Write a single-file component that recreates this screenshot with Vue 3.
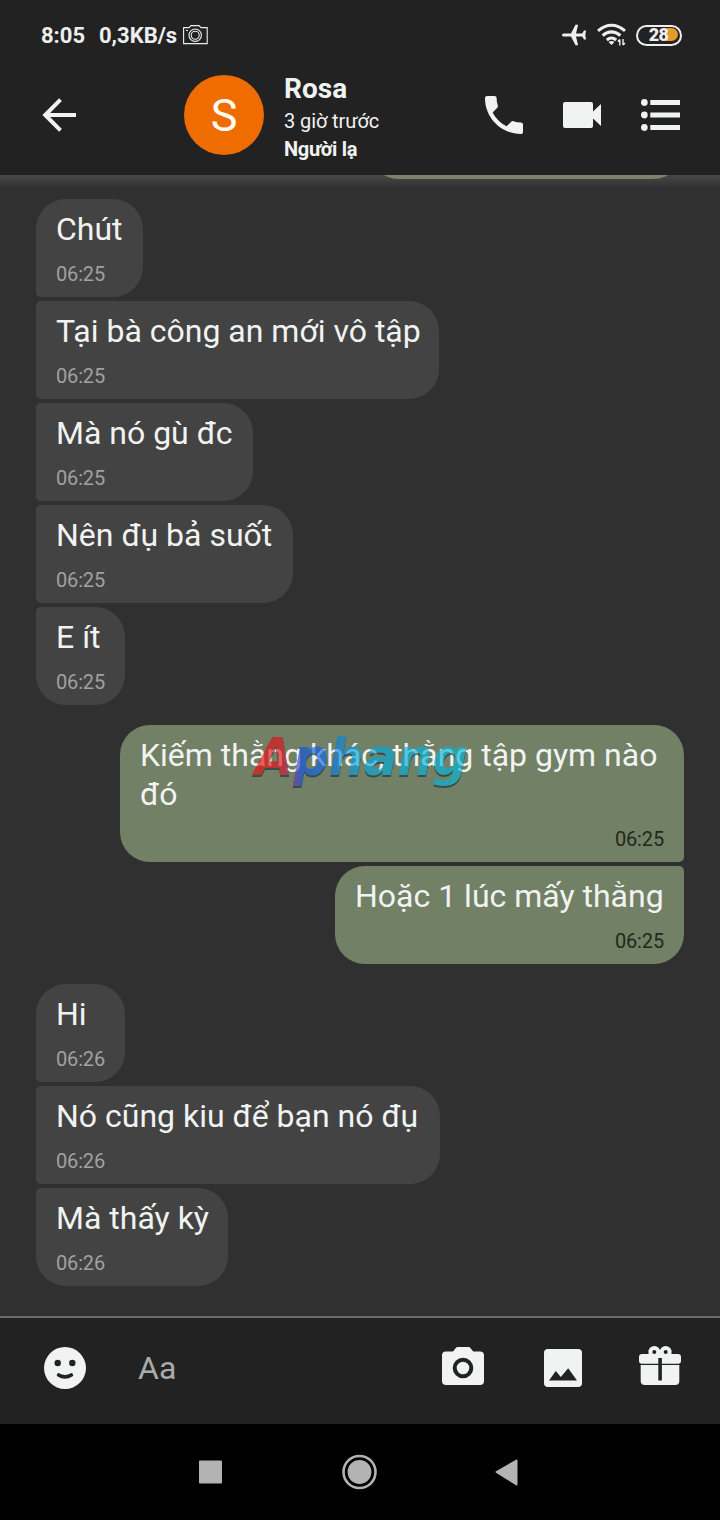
<script setup>
const groups = [
  {
    side: 'in',
    messages: [
      { text: 'Chút', time: '06:25', width: 107 },
      { text: 'Tại bà công an mới vô tập', time: '06:25', width: 403 },
      { text: 'Mà nó gù đc', time: '06:25', width: 217 },
      { text: 'Nên đụ bả suốt', time: '06:25', width: 257 },
      { text: 'E ít', time: '06:25', width: 89 },
    ],
  },
  {
    side: 'out',
    messages: [
      { text: 'Kiếm thằng khác, thằng tập gym nào đó', time: '06:25', width: 564, wrap: true },
      { text: 'Hoặc 1 lúc mấy thằng', time: '06:25', width: 349 },
    ],
  },
  {
    side: 'in',
    messages: [
      { text: 'Hi', time: '06:26', width: 89 },
      { text: 'Nó cũng kiu để bạn nó đụ', time: '06:26', width: 404 },
      { text: 'Mà thấy kỳ', time: '06:26', width: 192 },
    ],
  },
]
</script>

<template>
  <main class="phone">
    <div class="status">
      <span class="clock">8:05</span>
      <span class="speed">0,3KB/s</span>
      <svg class="shot" width="25" height="20" viewBox="0 0 25 20" fill="none" stroke="#eee" stroke-width="1.1">
        <path d="M.6 2.6H6L8 .6h8l2 2h6.2v16H.6z" />
        <circle cx="12.2" cy="10.2" r="6.2" />
        <circle cx="12.2" cy="10.2" r="4" />
        <path d="M3 5.5h2" />
      </svg>
      <span class="grow"></span>
      <svg class="plane" width="25" height="22" viewBox="0 0 25 22" fill="#eee">
        <path d="M0 11C0 10 1 9.500 2.500 9.500H9L13.500 .7h2.600L14 9.500h6.200L22 6.500h2L23.300 11l.7 4.500h-2L20.200 12.500H14l2.100 8.800h-2.600L9 12.500H2.500C1 12.500 0 12 0 11z" />
      </svg>
      <svg class="wifi" width="30" height="24" viewBox="0 0 30 24" fill="none" stroke="#eee" stroke-width="3">
        <path d="M1 7.800Q14.500-3.200 28 7.800" />
        <path d="M5.600 12.500Q14.500 5.200 23.400 12.500" />
        <path d="M9.800 17Q14.500 13 19.200 17" />
        <path d="M11.500 19Q14.500 17 17.500 19L14.500 22z" fill="#eee" stroke="none" />
        <path d="M22.800 16.500v6M20.800 18.500l2-2M26 16v6M28 20l-2 2" stroke-width="1.400" />
      </svg>
      <span class="battery"><i></i><b>28</b></span>
    </div>

    <header class="header">
      <svg class="back" width="34" height="34" viewBox="0 0 34 34" fill="none" stroke="#f1f3f2" stroke-width="4">
        <path d="M34 17H3.500M18.500 1.700 3.200 17 18.500 32.300" />
      </svg>
      <div class="avatar">S</div>
      <div class="who">
        <div class="name">Rosa</div>
        <div class="seen">3 giờ trước</div>
        <div class="relation">Người lạ</div>
      </div>
      <svg class="call" width="38" height="38" viewBox="3 3 18 18" fill="#f1f3f2">
        <path d="M6.620 10.790c1.440 2.830 3.760 5.140 6.590 6.590l2.200-2.200c.27-.27.67-.36 1.020-.24 1.120.37 2.330.57 3.570.57.55 0 1 .45 1 1V20c0 .55-.45 1-1 1-9.390 0-17-7.610-17-17 0-.55.45-1 1-1h3.500c.55 0 1 .45 1 1 0 1.250.2 2.450.57 3.570.11.35.03.74-.25 1.020l-2.200 2.200z" />
      </svg>
      <svg class="video" width="38" height="26" viewBox="0 0 38 26" fill="#f1f3f2">
        <path d="M2 0h26q2 0 2 2v7.500L38 2v22l-8-7.500V24q0 2-2 2H2q-2 0-2-2V2Q0 0 2 0z" />
      </svg>
      <svg class="menu" width="39" height="32" viewBox="0 0 39 32" fill="#f1f3f2">
        <circle cx="3.300" cy="3.500" r="3.400" /><circle cx="3.300" cy="16" r="3.400" /><circle cx="3.300" cy="28.500" r="3.400" />
        <path d="M9.300 1H39v5H9.300zM9.300 13.500H39v5H9.300zM9.300 26H39v5H9.300z" />
      </svg>
    </header>

    <section class="chat">
      <div class="previous"></div>
      <div v-for="(group, g) in groups" :key="g" class="group" :class="group.side">
        <div
          v-for="(m, i) in group.messages"
          :key="i"
          class="bubble"
          :class="{ wrap: m.wrap }"
          :style="{ width: m.width + 'px' }"
        >
          <p class="text">{{ m.text }}</p>
          <time class="time">{{ m.time }}</time>
        </div>
      </div>
      <svg class="brand" width="240" height="80" viewBox="0 0 240 80">
        <defs>
          <linearGradient id="brandFill" gradientUnits="userSpaceOnUse" x1="12" y1="0" x2="227" y2="0">
            <stop offset="0" stop-color="#ed0a0b" />
            <stop offset=".13" stop-color="#e0101c" />
            <stop offset=".18" stop-color="#8a2e8c" />
            <stop offset=".22" stop-color="#0b4fee" />
            <stop offset=".32" stop-color="#0b66e8" />
            <stop offset=".48" stop-color="#03a5dc" />
            <stop offset="1" stop-color="#03bcda" />
          </linearGradient>
        </defs>
        <text x="13" y="56" textLength="213" lengthAdjust="spacingAndGlyphs" fill="url(#brandFill)">Aphang</text>
      </svg>
    </section>

    <footer class="composer">
      <svg class="smile" width="42" height="42" viewBox="0 0 42 42">
        <circle cx="21" cy="21" r="21" fill="#f1f3f2" />
        <g fill="#222">
          <circle cx="13.700" cy="16" r="3.200" /><circle cx="28.300" cy="16" r="3.200" />
          <path d="M15 26.200q6 3.400 12 0q1-.5 1.600.5l.5 1q.5 1-.4 1.600q-7.700 5-15.400 0q-.9-.6-.4-1.600l.5-1q.6-1 1.600-.5z" />
        </g>
      </svg>
      <span class="hint">Aa</span>
      <svg class="camera" width="42" height="38" viewBox="0 0 42 38">
        <path d="M4 4.500h7L14 .8q.6-.8 1.600-.8h11q1 0 1.600.8l3 3.700H38q4 0 4 4V34q0 4-4 4H4q-4 0-4-4V8.500q0-4 4-4z" fill="#f1f3f2" />
        <circle cx="21" cy="21" r="8.300" fill="none" stroke="#222" stroke-width="4" />
      </svg>
      <svg class="picture" width="38" height="38" viewBox="0 0 38 38">
        <rect width="38" height="38" rx="4" fill="#f1f3f2" />
        <path d="M5 31.500 11.800 22l5 6L24.200 19.300 33 31.500z" fill="#222" />
      </svg>
      <svg class="gift" width="42" height="39" viewBox="0 0 42 39">
        <g fill="#f1f3f2">
          <circle cx="15.300" cy="6" r="6" /><circle cx="26.700" cy="6" r="6" />
          <rect x="0" y="8" width="42" height="9.700" rx="3" />
          <path d="M1.700 19h38.600v16q0 4-4 4H5.700q-4 0-4-4z" />
        </g>
        <g fill="#222">
          <circle cx="15.300" cy="6" r="2" /><circle cx="26.700" cy="6" r="2" />
          <path d="M19.300 12h3.600v22.500h-3.600z" />
        </g>
      </svg>
    </footer>

    <nav class="nav">
      <svg width="320" height="36" viewBox="0 0 320 36" fill="#b3b3b3">
        <rect x="0" y="6.500" width="23" height="23" rx="1" />
        <circle cx="160.500" cy="18" r="16" fill="none" stroke="#b3b3b3" stroke-width="2.600" />
        <circle cx="160.500" cy="18" r="11.900" />
        <path d="M297 17.300 317 5.700q1.500-.7 1.500 1v23.600q0 1.700-1.500 1L297 18.700q-1-.7 0-1.400z" />
      </svg>
    </nav>
  </main>
</template>

<style>
body {
  background: #303030;
}
</style>

<style scoped>
.phone {
  width: 720px;
  height: 1520px;
  display: flex;
  flex-direction: column;
  overflow: hidden;
  background: #303030;
  color: #f1f3f2;
  font-family: Roboto, "Liberation Sans", sans-serif;
}
svg {
  display: block;
  flex: none;
}
.status {
  height: 70px;
  flex: none;
  display: flex;
  box-sizing: border-box;
  align-items: center;
  padding: 0 38px 0 41px;
  background: #222;
  color: #eee;
  font-size: 22px;
  font-weight: 700;
}
.clock {
  width: 58px;
}
.speed {
  width: 78px;
  white-space: nowrap;
}
.shot {
  margin-left: 6px;
}
.grow {
  flex: 1;
}
.wifi {
  margin: 0 9px 0 10px;
}
.battery {
  position: relative;
  width: 46px;
  height: 21px;
  box-sizing: border-box;
  padding-right: 1px;
  border: 2.5px solid #eee;
  border-radius: 11px;
  text-align: center;
  font-size: 18px;
  line-height: 16px;
  letter-spacing: -0.7px;
}
.battery i {
  position: absolute;
  right: 2px;
  top: 1.500px;
  width: 13px;
  height: 13px;
  border-radius: 2px 7px 7px 2px;
  background: #e49a2c;
}
.battery b {
  position: relative;
}
.header {
  height: 105px;
  flex: none;
  display: flex;
  box-sizing: border-box;
  padding: 5px 40px 0 42px;
  background: #222;
}
.back {
  margin: 23px 108px 0 0;
}
.avatar {
  width: 80px;
  height: 80px;
  border-radius: 50%;
  background: #ef6c00;
  color: #fffdf3;
  font-size: 45px;
  line-height: 82px;
  text-align: center;
}
.who {
  width: 200px;
  margin-left: 20px;
  white-space: nowrap;
}
.name {
  font-size: 28px;
  font-weight: 700;
  line-height: 28px;
}
.seen {
  margin-top: 4px;
  font-size: 20px;
  line-height: 28px;
  letter-spacing: -0.1px;
}
.relation {
  font-size: 20px;
  font-weight: 700;
  line-height: 28px;
  letter-spacing: -0.3px;
}
.call {
  margin: 21px 0 0 1px;
}
.video {
  margin: 27px 0 0 40px;
}
.menu {
  margin: 24px 0 0 40px;
}
.chat {
  position: relative;
  flex: 1;
  display: flex;
  flex-direction: column;
  gap: 20px;
  padding: 0 36px;
  background: linear-gradient(#484848, #303030 13px);
}
.previous {
  width: 316px;
  height: 4px;
  align-self: flex-end;
  overflow: hidden;
  display: flex;
  align-items: flex-end;
}
.previous::before {
  content: "";
  flex: 1 0 100%;
  height: 64px;
  border-radius: 31px;
  background: #7c8369;
}
.group {
  display: flex;
  flex-direction: column;
  gap: 4px;
}
.bubble {
  box-sizing: border-box;
  padding: 11px 20px;
  background: #434343;
  white-space: nowrap;
}
.wrap {
  white-space: normal;
}
.in .bubble {
  align-self: flex-start;
  border-radius: 5px 30px 30px 5px;
}
.in .bubble:first-child {
  border-top-left-radius: 30px;
}
.in .bubble:last-child {
  border-bottom-left-radius: 30px;
}
.out .bubble {
  align-self: flex-end;
  border-radius: 30px 5px 5px 30px;
  background: #728065;
}
.out .bubble:first-child {
  border-top-right-radius: 30px;
}
.out .bubble:last-child {
  border-bottom-right-radius: 30px;
}
.text {
  margin: 0;
  font-size: 32px;
  line-height: 39px;
}
.time {
  display: block;
  margin-top: 13px;
  font-size: 20px;
  line-height: 24px;
  letter-spacing: -0.15px;
  color: #a1a1a1;
}
.out .time {
  text-align: right;
  color: #202a1b;
}
.brand {
  position: absolute;
  left: 242px;
  top: 544px;
  opacity: .64;
  filter: drop-shadow(0 2px 0.5px #173238);
  font-family: "DejaVu Sans", sans-serif;
  font-size: 52px;
  font-style: italic;
  font-weight: 700;
}
.composer {
  height: 108px;
  flex: none;
  box-sizing: border-box;
  display: flex;
  border-top: 2px solid #6c6c6c;
  padding: 0 39px 0 44px;
  background: #222;
}
.smile {
  margin-top: 29px;
}
.hint {
  width: 304px;
  margin: 31px 0 0 52px;
  font-size: 32px;
  line-height: 38px;
  color: #aaa;
}
.camera {
  margin-top: 29px;
}
.picture {
  margin: 31px 0 0 60px;
}
.gift {
  margin: 28px 0 0 57px;
}
.nav {
  height: 96px;
  flex: none;
  display: flex;
  align-items: center;
  padding-left: 198.500px;
  background: #000;
}
</style>
